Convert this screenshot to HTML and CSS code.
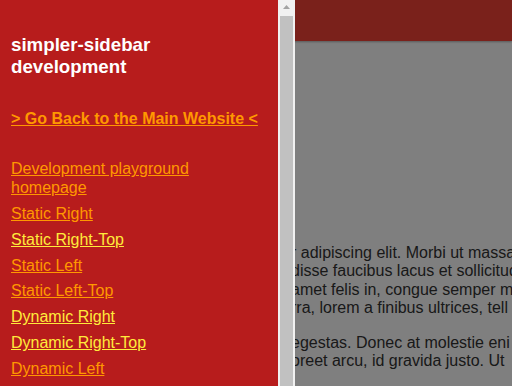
FILE: index.html
```html
<!DOCTYPE html>
<html lang="en">
<head>
<meta charset="utf-8">
<title>simpler-sidebar development</title>
<link rel="stylesheet" href="styles.css">
</head>
<body>
<div class="page">
  <header class="topbar"></header>
  <main class="content">
    <p class="para">r adipiscing elit. Morbi ut massa<br>disse faucibus lacus et sollicitud<br>amet felis in, congue semper m<br>rra, lorem a finibus ultrices, tell</p>
    <p class="para">egestas. Donec at molestie eni<br>oreet arcu, id gravida justo. Ut</p>
  </main>
  <div class="overlay"></div>
</div>
<aside class="sidebar">
  <div class="sidebar-body">
    <h3 class="sidebar-title">simpler-sidebar development</h3>
    <p class="back"><a class="back-link" href="#">&gt; Go Back to the Main Website &lt;</a></p>
    <ul class="nav">
      <li class="nav-item"><a class="nav-link" href="#">Development playground homepage</a></li>
      <li class="nav-item"><a class="nav-link" href="#">Static Right</a></li>
      <li class="nav-item"><a class="nav-link visited" href="#">Static Right-Top</a></li>
      <li class="nav-item"><a class="nav-link" href="#">Static Left</a></li>
      <li class="nav-item"><a class="nav-link" href="#">Static Left-Top</a></li>
      <li class="nav-item"><a class="nav-link visited" href="#">Dynamic Right</a></li>
      <li class="nav-item"><a class="nav-link visited" href="#">Dynamic Right-Top</a></li>
      <li class="nav-item"><a class="nav-link" href="#">Dynamic Left</a></li>
    </ul>
  </div>
  <div class="scrollbar">
    <div class="scroll-btn">
      <svg width="7" height="4" viewBox="0 0 7 4"><path d="M0 4 L3.5 0 L7 4 Z" fill="#a3a3a3"/></svg>
    </div>
    <div class="scroll-thumb"></div>
  </div>
</aside>
</body>
</html>
```
FILE: styles.css
```css
html, body {
  margin: 0;
  padding: 0;
  height: 100%;
  overflow: hidden;
  font-family: "Liberation Sans", Arial, sans-serif;
  font-size: 16px;
}

.page {
  position: relative;
  min-height: 100%;
  background: #ffffff;
}

.topbar {
  height: 41px;
  background: #f44336;
  box-shadow: 0 1px 2px rgba(0, 0, 0, 0.3);
}

.content {
  padding-top: 203px;
  padding-left: 291px;
  color: #333333;
}

.para {
  margin: 0 0 16px;
  white-space: nowrap;
  line-height: 18.4px;
}

.overlay {
  position: absolute;
  inset: 0;
  background: rgba(0, 0, 0, 0.5);
}

.sidebar {
  position: fixed;
  top: 0;
  left: 0;
  bottom: 0;
  width: 295px;
  display: flex;
}

.sidebar-body {
  width: 278px;
  box-sizing: border-box;
  background: #b71c1c;
  padding: 34px 11px 0;
  overflow: hidden;
}

.sidebar-title {
  margin: 0;
  color: #ffffff;
  font-size: 18.72px;
  line-height: 21.5px;
  font-weight: bold;
}

.back {
  margin: 33px 0 0;
  line-height: 18.4px;
}

.back-link {
  color: #ff9800;
  font-weight: bold;
}

.nav {
  list-style: none;
  margin: 32px 0 0;
  padding: 0;
}

.nav-item {
  line-height: 18.4px;
  margin-bottom: 7.5px;
}

.nav-link {
  color: #ff9800;
}

.nav-link.visited {
  color: #ffeb3b;
}

.scrollbar {
  width: 17px;
  background: #f1f1f1;
  display: flex;
  flex-direction: column;
}

.scroll-btn {
  height: 16px;
  display: flex;
  align-items: center;
  justify-content: center;
  padding-right: 1px;
}

.scroll-btn svg {
  display: block;
  margin-top: -2px;
}

.scroll-thumb {
  flex: 1;
  margin: 0 2px 0 2px;
  background: #c1c1c1;
}
```
